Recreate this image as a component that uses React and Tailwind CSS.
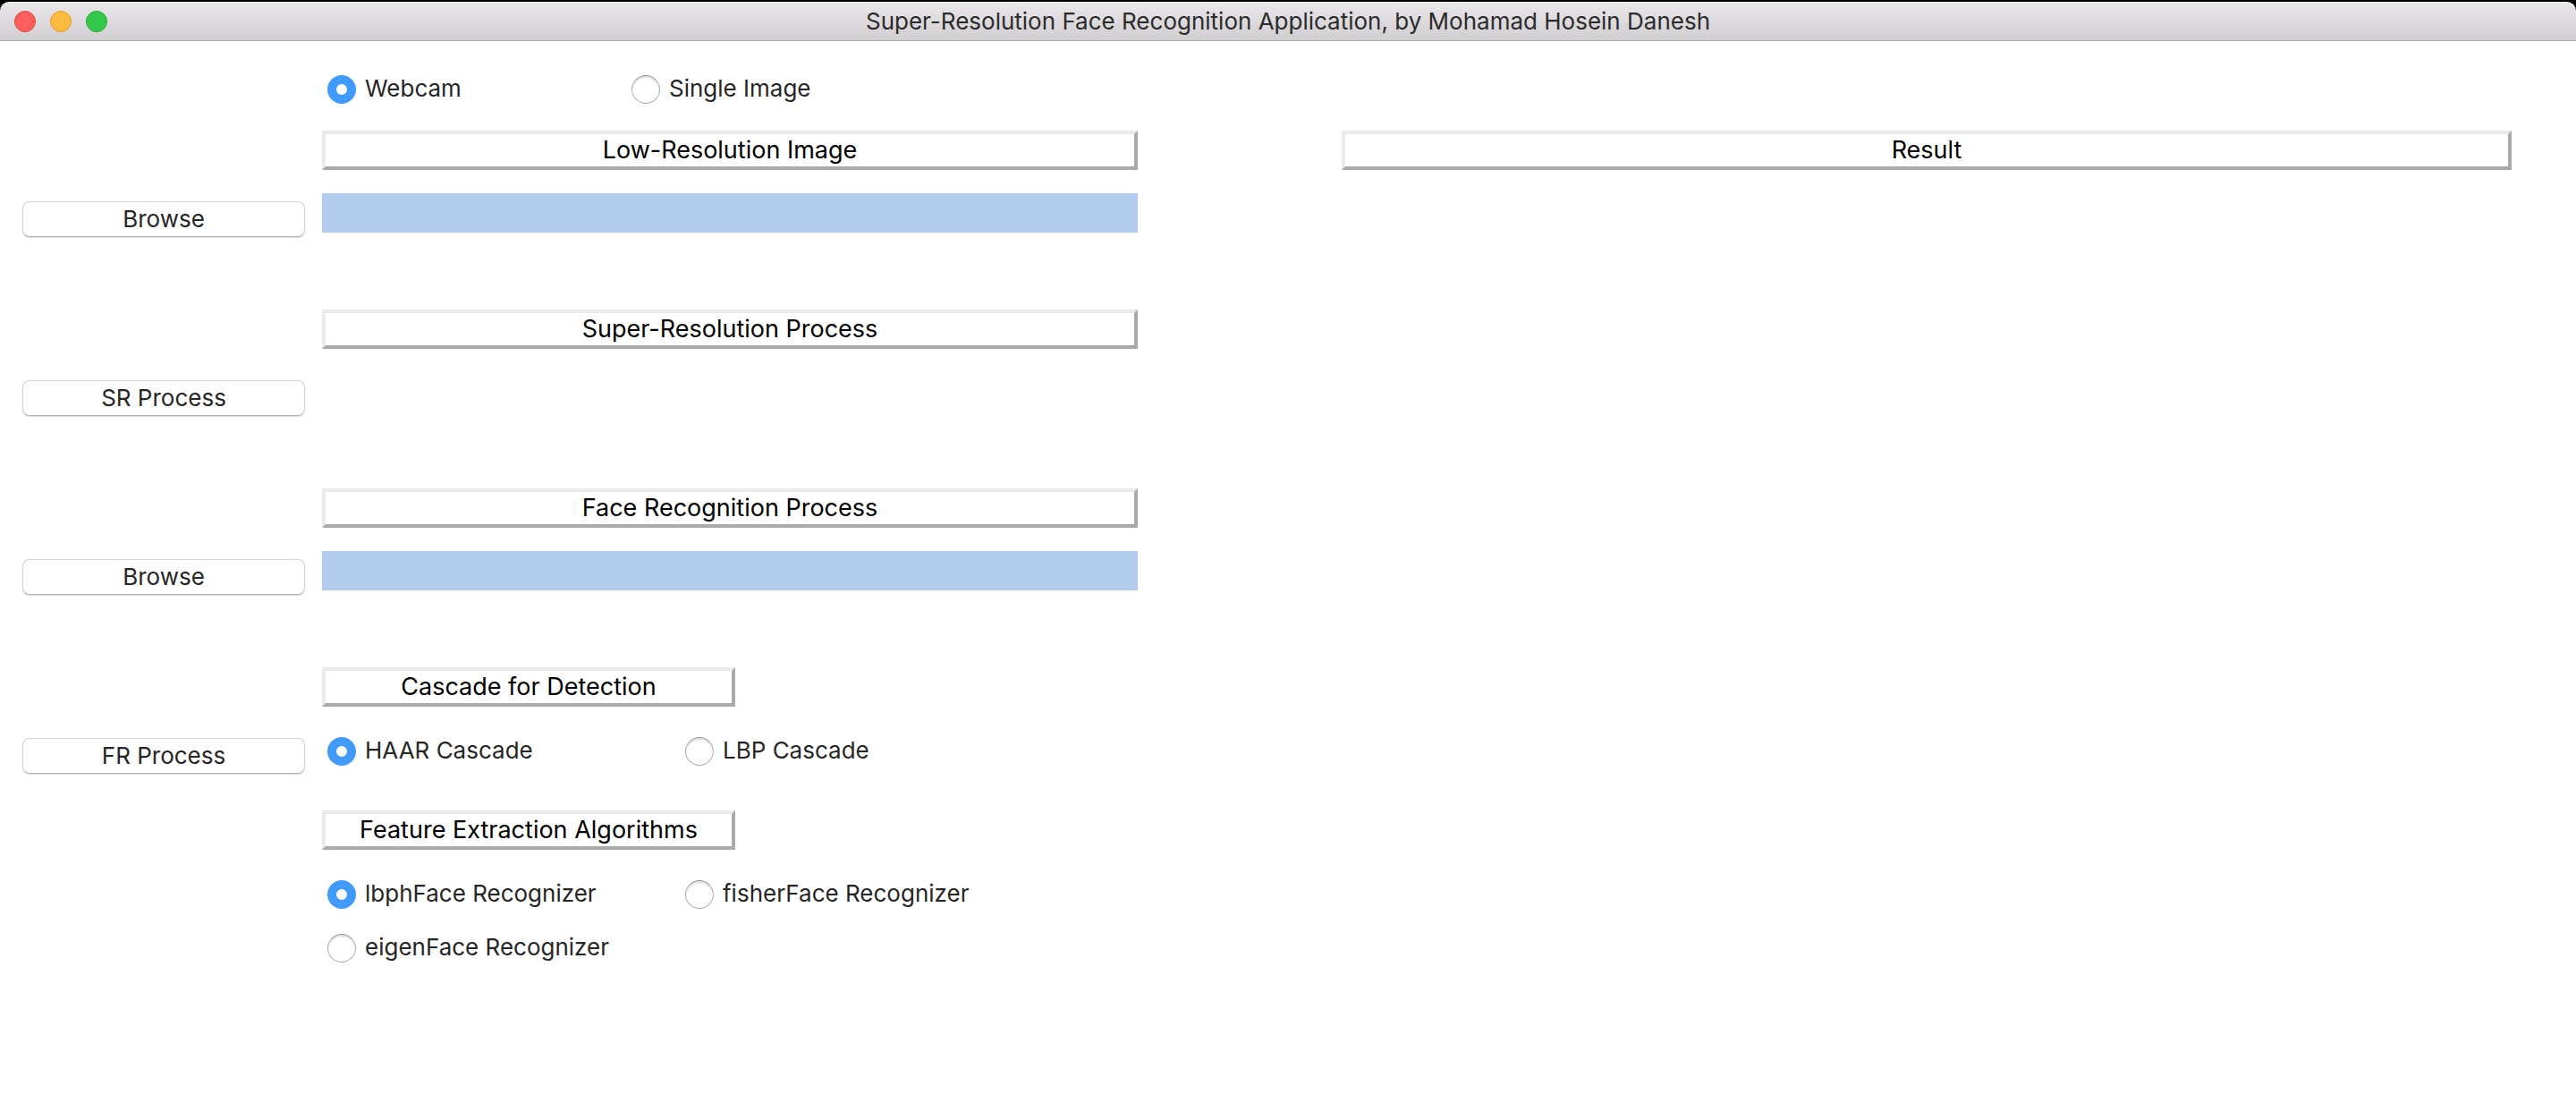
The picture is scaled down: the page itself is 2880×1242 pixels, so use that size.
const lights = [
  { name: "Close", style: "bg-[#fc605c] border-[#e2463f]" },
  { name: "Minimize", style: "bg-[#fdbc40] border-[#dfa034]" },
  { name: "Zoom", style: "bg-[#34c84a] border-[#27aa35]" },
];

function TitleBar() {
  return (
    <div className="bg-black pt-0.5">
      <header className="grid h-11 grid-cols-[1fr_auto_1fr] items-center rounded-t-[10px] border-t border-b border-t-[#f4f3f4] border-b-[#adabad] bg-linear-to-b from-[#e9e7e9] to-[#d0ced0] px-4">
        <div className="flex gap-4">
          {lights.map((light) => (
            <button
              key={light.name}
              type="button"
              aria-label={light.name}
              className={`size-6 rounded-full border ${light.style}`}
            />
          ))}
        </div>
        <h1 className="text-[#2c2b2c]">
          Super-Resolution Face Recognition Application, by Mohamad Hosein Danesh
        </h1>
      </header>
    </div>
  );
}

function Heading({ children, className = "w-full" }) {
  return (
    <h2
      className={`h-11 border-4 border-t-[#ebebeb] border-r-[#a9a9a9] border-b-[#a9a9a9] border-l-[#ebebeb] text-center text-[27px] leading-9 text-black ${className}`}
    >
      {children}
    </h2>
  );
}

function PushButton({ children }) {
  return (
    <button
      type="button"
      className="h-10 w-full self-center rounded-lg border border-[#d2d2d2] border-b-[#b4b4b4] bg-white shadow-[0_1px_1px_rgba(0,0,0,0.15)]"
    >
      {children}
    </button>
  );
}

function Radio({ name, label, defaultChecked = false }) {
  return (
    <label className="flex h-8 items-center gap-2.5">
      <input
        type="radio"
        name={name}
        defaultChecked={defaultChecked}
        className="size-8 shrink-0 appearance-none rounded-full border border-[#b4b4b4] border-t-[#969696] bg-white shadow-[inset_0_2px_2px_rgba(0,0,0,0.14)] checked:border-[10px] checked:border-[#409bfc] checked:shadow-none"
      />
      <span className="pb-0.5 whitespace-nowrap">{label}</span>
    </label>
  );
}

function PathField({ label }) {
  return (
    <input
      type="text"
      readOnly
      aria-label={label}
      className="h-11 w-full bg-[#b3cbed] px-2 outline-none"
    />
  );
}

/* A heading with a labelled action button and its content below. */
function Step({ heading, action, children }) {
  return (
    <section className="grid grid-cols-[316px_1fr] gap-x-[19px] gap-y-[26px]">
      <div className="col-start-2">{heading}</div>
      <div className="col-start-1 flex min-h-[58px]">
        {action && <PushButton>{action}</PushButton>}
      </div>
      <div>{children}</div>
    </section>
  );
}

export default function App() {
  return (
    <div className="min-h-screen bg-white font-['Inter',sans-serif] text-[26px] leading-8 text-[#262626]">
      <TitleBar />
      <main className="grid grid-cols-[1247fr_1308fr] gap-x-[228px] pt-[38px] pr-[72px] pb-16 pl-[25px]">
        <div>
          <div className="mb-[30px] ml-[341px] grid grid-cols-[340px_1fr]">
            <Radio name="source" label="Webcam" defaultChecked />
            <Radio name="source" label="Single Image" />
          </div>
          <div className="flex flex-col gap-[72px]">
            <Step heading={<Heading>Low-Resolution Image</Heading>} action="Browse">
              <PathField label="Low-resolution image path" />
            </Step>
            <Step heading={<Heading>Super-Resolution Process</Heading>} action="SR Process" />
            <Step heading={<Heading>Face Recognition Process</Heading>} action="Browse">
              <PathField label="Face recognition path" />
            </Step>
            <div className="flex flex-col gap-8">
              <Step
                heading={<Heading className="w-[462px]">Cascade for Detection</Heading>}
                action="FR Process"
              >
                <div className="grid grid-cols-[400px_1fr] pt-2 pl-1.5">
                  <Radio name="cascade" label="HAAR Cascade" defaultChecked />
                  <Radio name="cascade" label="LBP Cascade" />
                </div>
              </Step>
              <Step heading={<Heading className="w-[462px]">Feature Extraction Algorithms</Heading>}>
                <div className="grid grid-cols-[400px_1fr] gap-y-7 pt-2 pl-1.5">
                  <Radio name="recognizer" label="lbphFace Recognizer" defaultChecked />
                  <Radio name="recognizer" label="fisherFace Recognizer" />
                  <Radio name="recognizer" label="eigenFace Recognizer" />
                </div>
              </Step>
            </div>
          </div>
        </div>
        <section className="pt-[62px]">
          <Heading>Result</Heading>
        </section>
      </main>
    </div>
  );
}
